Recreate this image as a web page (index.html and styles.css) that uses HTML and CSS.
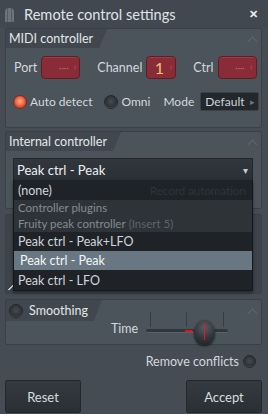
FILE: index.html
```html
<!DOCTYPE html>
<html lang="en">
<head>
    <meta charset="UTF-8">
    <meta name="viewport" content="width=device-width, initial-scale=1.0">
    <title>Remote control settings</title>
    <link rel="stylesheet" href="styles.css">
</head>
<body>
<div class="window">
    <div class="titlebar">
        <span class="app-icon"></span>
        <span class="title">Remote control settings</span>
        <span class="close">&#x2715;</span>
    </div>

    <div class="content">
        <section class="panel midi">
            <div class="panel-head">
                <div class="tab">MIDI controller</div>
                <span class="chevron"></span>
            </div>
            <div class="row fields">
                <span class="lbl">Port</span>
                <span class="box wide"><i>&middot;&middot;&middot;&middot;</i><b>&rsaquo;</b></span>
                <span class="lbl">Channel</span>
                <span class="box narrow"><em>1</em><b>&rsaquo;</b></span>
                <span class="lbl">Ctrl</span>
                <span class="box wide"><i>&middot;&middot;&middot;&middot;</i><b>&rsaquo;</b></span>
            </div>
            <div class="row radios">
                <span class="radio on"></span><span class="lbl">Auto detect</span>
                <span class="radio"></span><span class="lbl">Omni</span>
                <span class="lbl mode">Mode</span>
                <span class="mini-select">Default<b>&#9656;</b></span>
            </div>
        </section>

        <section class="panel internal">
            <div class="panel-head">
                <div class="tab">Internal controller</div>
                <span class="chevron"></span>
            </div>
            <div class="select">Peak ctrl - Peak<b>&#9662;</b></div>
        </section>

        <section class="panel behind">
            <span class="grip"></span>
        </section>

        <section class="panel smoothing">
            <div class="panel-head">
                <div class="tab"><span class="radio"></span>Smoothing</div>
                <span class="chevron"></span>
            </div>
            <div class="row time">
                <span class="lbl">Time</span>
                <div class="slider">
                    <span class="tick"></span><span class="tick"></span><span class="tick"></span>
                    <span class="track"></span>
                    <span class="mark"></span>
                    <span class="knob"></span>
                </div>
            </div>
        </section>

        <div class="conflicts">
            <span class="lbl">Remove conflicts</span>
            <span class="radio"></span>
        </div>

        <div class="buttons">
            <button class="btn">Reset</button>
            <button class="btn">Accept</button>
        </div>
    </div>

    <ul class="popup">
        <li class="item dark">(none)<span class="faint">Record automation</span></li>
        <li class="item group">Controller plugins</li>
        <li class="item group plugin">Fruity peak controller <span>(Insert 5)</span></li>
        <li class="item dark">Peak ctrl - Peak+LFO</li>
        <li class="item sel">Peak ctrl - Peak</li>
        <li class="item dark last">Peak ctrl - LFO</li>
    </ul>
</div>
</body>
</html>
```

FILE: styles.css
```css
* {
    box-sizing: border-box;
}
body {
    margin: 0;
    background: #434a52;
    font-family: "Lato", sans-serif;
    font-size: 12px;
    color: #d3d9dc;
}
.window {
    position: relative;
    width: 268px;
    height: 414px;
    background: #454c54;
}

/* title bar */
.titlebar {
    height: 28px;
    display: flex;
    align-items: center;
    padding: 0 10px 0 5px;
    background: #41484f;
}
.app-icon {
    width: 9px;
    height: 14px;
    margin-top: 1px;
    border-radius: 4px 4px 1px 1px;
    background: linear-gradient(90deg, #6c737a 0 2px, #565d64 2px 3px, #6c737a 3px 6px, #565d64 6px 7px, #6c737a 7px);
}
.title {
    margin-left: 10px;
    font-size: 14.6px;
    color: #dfe4e7;
    flex: 1;
    white-space: nowrap;
}
.close {
    font-size: 11px;
    color: #e8eef2;
    font-weight: bold;
}

.content {
    padding: 0 6px 0 5px;
}

/* panels */
.panel {
    background: #4b535b;
    border: 1px solid #3a4047;
    border-radius: 2px;
}
.panel-head {
    height: 19px;
    display: flex;
    align-items: center;
    justify-content: space-between;
    padding-right: 5px;
}
.tab {
    height: 19px;
    padding: 0 14px 0 3px;
    display: flex;
    align-items: center;
    gap: 3px;
    font-size: 12.5px;
    color: #e3e7ea;
    background: #40474e;
    white-space: nowrap;
    clip-path: polygon(0 0, 100% 0, calc(100% - 8px) 100%, 0 100%);
}
.chevron {
    width: 7px;
    height: 7px;
    margin-top: 5px;
    border-left: 1.5px solid #5f676f;
    border-top: 1.5px solid #5f676f;
    transform: rotate(45deg);
}

.row {
    display: flex;
    align-items: center;
}
.lbl {
    color: #d3d9dc;
    font-size: 12.5px;
    white-space: nowrap;
    flex: none;
}

.midi {
    height: 100px;
}
.fields {
    margin-top: 8px;
    padding-left: 8px;
}
.box {
    height: 23px;
    flex: none;
    display: flex;
    align-items: center;
    justify-content: center;
    position: relative;
    background: #8a2c37;
    border: 1px solid #5e1e26;
    border-radius: 4px;
    box-shadow: inset 0 1px 0 #a03a46;
}
.box i {
    font-style: normal;
    color: #c96872;
    font-size: 9px;
    margin-left: 6px;
}
.box b {
    position: absolute;
    right: 3px;
    top: 3px;
    font-weight: normal;
    font-size: 10px;
    color: #b55360;
}
.box.wide {
    width: 39px;
    margin: 0 17px 0 4px;
}
.box.narrow {
    width: 30px;
    margin: 0 17px 0 4px;
}
.box em {
    font-style: normal;
    font-size: 16px;
    color: #efc27a;
    margin-right: 4px;
}
.radios {
    margin-top: 13px;
    padding-left: 7px;
}
.radios .lbl {
    font-size: 12px;
}
.radio {
    width: 14px;
    height: 14px;
    border-radius: 50%;
    border: 1px solid #22272b;
    background: radial-gradient(circle at 50% 45%, #454b51 0, #2d3237 62%, #6a7177 82%);
    margin-right: 3px;
    flex: none;
}
.radio.on {
    border-color: #7b2d22;
    background: radial-gradient(circle at 50% 45%, #ffb08a 0, #f06a45 45%, #c9412b 70%, #ef9a80 85%);
}
.radios .lbl + .radio {
    margin-left: 12px;
}
.mode {
    margin-left: 13px;
}
.mini-select {
    margin-left: 6px;
    width: 59px;
    height: 19px;
    flex: none;
    display: flex;
    align-items: center;
    justify-content: space-between;
    padding: 0 3px 0 4px;
    background: #23282d;
    border: 1px solid #3b4148;
    border-radius: 2px;
    color: #cdd3d6;
}
.mini-select b {
    font-weight: normal;
    font-size: 9px;
    color: #6f777e;
}

.internal {
    margin-top: 3px;
    height: 78px;
}
.select {
    margin: 7px 8px 0 7px;
    height: 22px;
    display: flex;
    align-items: center;
    justify-content: space-between;
    padding: 0 4px 0 3px;
    background: linear-gradient(#31373d, #2a2f35);
    border: 1px solid #22272b;
    border-bottom: none;
    color: #eef1f3;
    font-size: 13px;
}
.select b {
    font-weight: normal;
    font-size: 10px;
    color: #c3c9cd;
}

.behind {
    margin-top: 5px;
    height: 80px;
    background: #3d444b;
    display: flex;
    align-items: flex-end;
    padding: 0 0 3px 2px;
}
.grip {
    width: 6px;
    height: 6px;
    background: linear-gradient(135deg, transparent 45%, #c9cfd3 45% 60%, transparent 60%);
}

.smoothing {
    margin-top: 5px;
    height: 46px;
}
.smoothing .tab {
    height: 21px;
    padding-left: 3px;
}
.smoothing .panel-head {
    height: 21px;
}
.time {
    margin-top: -9px;
    padding-left: 105px;
}
.slider {
    position: relative;
    width: 82px;
    height: 32px;
    margin-left: 8px;
}
.tick {
    position: absolute;
    top: 0;
    width: 1px;
    height: 15px;
    background: #363c42;
}
.tick:nth-child(1) { left: 4px; }
.tick:nth-child(2) { left: 40px; }
.tick:nth-child(3) { left: 77px; }
.track {
    position: absolute;
    left: 0;
    right: 0;
    top: 17px;
    height: 4px;
    border-radius: 2px;
    background: #30363b;
    border-bottom: 1px solid #5a6269;
}
.mark {
    position: absolute;
    left: 39px;
    top: 18px;
    width: 8px;
    height: 2px;
    background: #e0161a;
}
.knob {
    position: absolute;
    left: 48px;
    top: 8px;
    width: 21px;
    height: 25px;
    border-radius: 50% 50% 46% 46%;
    background: radial-gradient(circle at 50% 30%, #555c62 0, #30353a 55%, #1d2125 100%);
    box-shadow: 0 1px 2px #1a1d20;
}
.knob::after {
    content: "";
    position: absolute;
    left: 10px;
    top: 3px;
    width: 1px;
    height: 17px;
    background: #e01a1e;
}

.conflicts {
    margin-top: 9px;
    display: flex;
    justify-content: flex-end;
    align-items: center;
    gap: 4px;
    padding-right: 3px;
}
.conflicts .radio {
    width: 13px;
    height: 13px;
}

.buttons {
    margin-top: 11px;
    display: flex;
    justify-content: space-between;
}
.btn {
    width: 76px;
    height: 33px;
    font-family: "Lato", sans-serif;
    font-size: 13px;
    color: #d6dcdf;
    background: linear-gradient(#343a40, #2a2f34);
    border: 1px solid #23282c;
    border-radius: 2px;
}

/* dropdown list shown open over the section */
.popup {
    position: absolute;
    left: 13px;
    top: 180px;
    width: 240px;
    margin: 0;
    padding: 0;
    list-style: none;
    background: #1e2227;
    border: 1px solid #15181b;
    border-top: none;
    box-shadow: 0 2px 3px rgba(0, 0, 0, 0.4);
}
.item {
    height: 19px;
    display: flex;
    align-items: center;
    padding-left: 4px;
    font-size: 12.5px;
    color: #cfd5d9;
    white-space: nowrap;
}
.item.dark {
    background: #1f2328;
}
.item:first-child {
    height: 20px;
}
.faint {
    margin-left: auto;
    margin-right: 6px;
    color: #2f343a;
    font-size: 11.5px;
}
.item.group {
    height: 15px;
    background: #2e3338;
    color: #838b92;
    font-size: 11.5px;
}
.item.plugin {
    height: 17px;
}
.item.plugin span {
    margin-left: 3px;
    color: #5c646b;
}
.item.sel {
    background: #687782;
    color: #f4f7f8;
    padding-left: 6px;
}
.item.last {
    height: 20px;
}
```
